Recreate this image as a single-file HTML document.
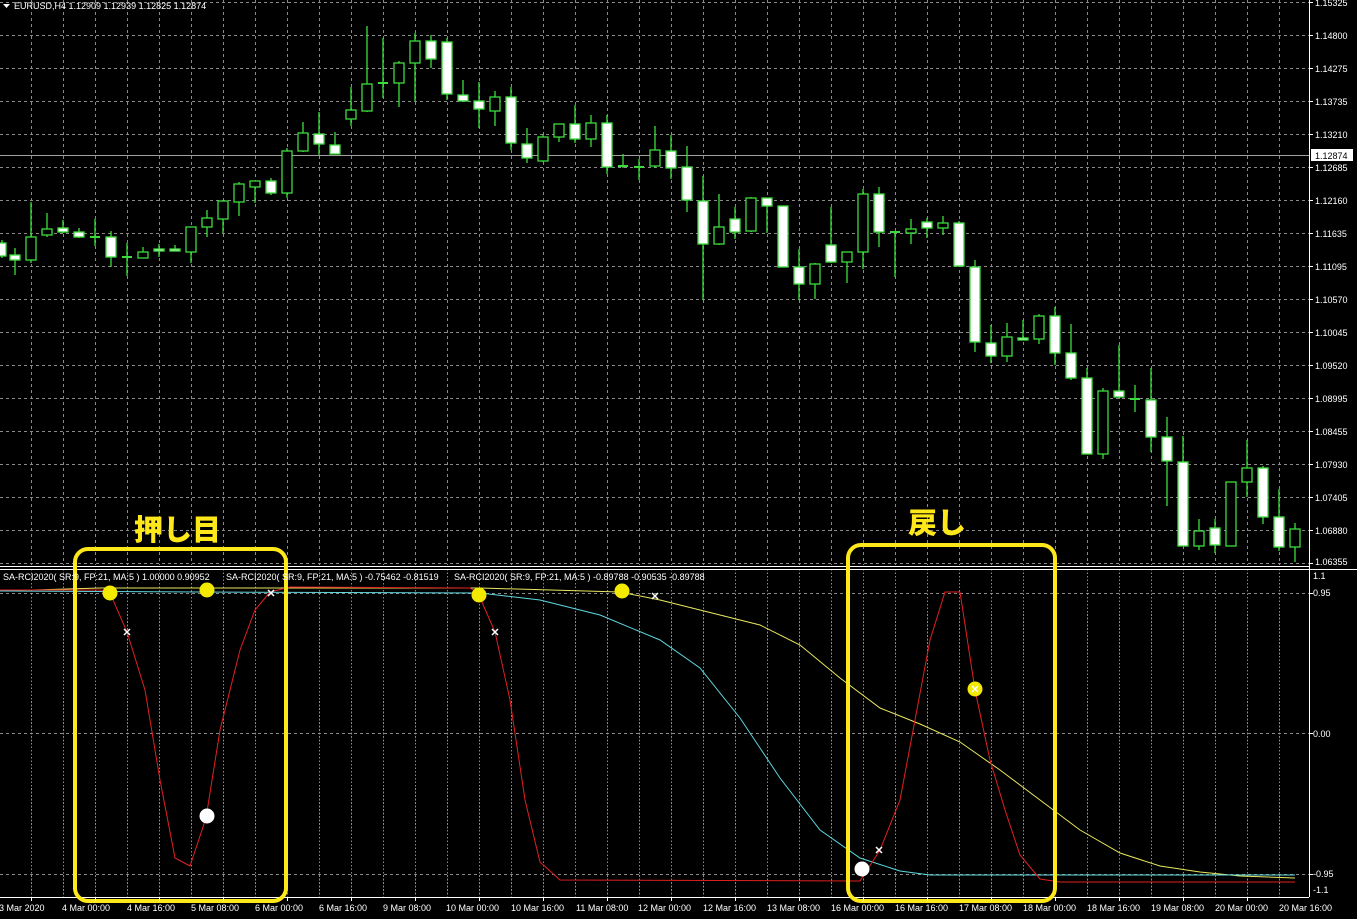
<!DOCTYPE html>
<html><head><meta charset="utf-8"><style>
html,body{margin:0;padding:0;background:#000;overflow:hidden}
svg{display:block}
text{font-family:"Liberation Sans",sans-serif;font-size:9px;fill:#fff}
.jp{font-family:"Liberation Sans","Noto Sans CJK JP",sans-serif;font-weight:900;font-size:29px;fill:#ffe81a}
</style></head><body>
<svg width="1357" height="919" viewBox="0 0 1357 919" xmlns="http://www.w3.org/2000/svg">
<rect width="1357" height="919" fill="#000"/>
<!-- main grid -->
<g stroke="#8a8a8a" stroke-width="1" stroke-dasharray="3,3" shape-rendering="crispEdges">
<path d="M0 2.5H1309M0 35.5H1309M0 68.5H1309M0 101.5H1309M0 134.5H1309M0 167.5H1309M0 200.5H1309M0 233.5H1309M0 266.5H1309M0 299.5H1309M0 332.5H1309M0 365.5H1309M0 398.5H1309M0 431.5H1309M0 464.5H1309M0 497.5H1309M0 530.5H1309M0 563.5H1309"/>
<path d="M0 593.5H1309M0 733.5H1309M0 874.5H1309"/>
<path id="vg" d="M31.5 0V565M63.5 0V565M95.5 0V565M127.5 0V565M159.5 0V565M191.5 0V565M223.5 0V565M255.5 0V565M287.5 0V565M319.5 0V565M351.5 0V565M383.5 0V565M415.5 0V565M447.5 0V565M479.5 0V565M511.5 0V565M543.5 0V565M575.5 0V565M607.5 0V565M639.5 0V565M671.5 0V565M703.5 0V565M735.5 0V565M767.5 0V565M799.5 0V565M831.5 0V565M863.5 0V565M895.5 0V565M927.5 0V565M959.5 0V565M991.5 0V565M1023.5 0V565M1055.5 0V565M1087.5 0V565M1119.5 0V565M1151.5 0V565M1183.5 0V565M1215.5 0V565M1247.5 0V565M1279.5 0V565"/>
<use href="#vg" transform="translate(0,569) scale(1,0.58)"/>
</g>
<!-- current price line -->
<line x1="0" y1="155.5" x2="1309" y2="155.5" stroke="#a0a0a0" stroke-width="1"/>
<!-- candles -->
<g stroke="#3cdc3c" stroke-width="1.3" fill="none">
<path d="M2 240V258M15 248V275M31 202V263M47 213V237M63 220V233M79 228V238M95 219V246M111 231V267M127 243V276M143 247V258M159 244V257M175 245V251M191 227V263M207 210V237M223 201V233M239 182V216M255 181V203M271 178V195M287 148V198M303 122V152M319 112V155M335 132V154M351 87V126M367 26V112M383 38V98M399 61V107M415 33V101M431 35V68M447 38V100M463 80V102M479 82V128M495 91V126M511 87V150M527 128V163M543 135V162M559 124V142M575 105V143M591 115V147M607 115V174M623 154V168M639 159V180M655 126V168M671 135V179M687 146V212M703 176V300M719 194V245M735 207V239M751 197V232M767 198V233M783 206V267M799 249V300M815 263V299M831 207V263M847 252V283M863 189V269M879 187V247M895 232V277M911 219V244M927 218V238M943 216V235M959 221V267M975 260V352M991 325V363M1007 323V362M1023 320V340M1039 314V344M1055 307V365M1071 324V380M1087 368V454M1103 388V459M1119 345V398M1135 385V412M1151 368V452M1167 417V506M1183 436V546M1199 519V550M1215 519V553M1231 482V546M1247 440V497M1263 466V524M1279 489V551M1295 523V562"/>
<path stroke-width="2" d="M90 237H100M122 257H132M378 83H388M618 166H628M634 167H644M890 232H900M1130 399H1140"/>
</g>
<g stroke="#3cdc3c" stroke-width="1.3" fill="#fff">
<rect x="-3" y="243" width="9" height="13"/><rect x="10" y="255" width="10" height="5"/><rect x="58" y="228" width="10" height="4"/><rect x="74" y="232" width="10" height="5"/><rect x="106" y="237" width="10" height="20"/><rect x="154" y="249" width="10" height="2"/><rect x="170" y="249" width="10" height="2"/><rect x="266" y="181" width="10" height="12"/><rect x="314" y="134" width="10" height="10"/><rect x="330" y="145" width="10" height="9"/><rect x="426" y="41" width="10" height="18"/><rect x="442" y="42" width="10" height="52"/><rect x="458" y="95" width="10" height="6"/><rect x="474" y="101" width="10" height="8"/><rect x="506" y="97" width="10" height="46"/><rect x="522" y="144" width="10" height="14"/><rect x="570" y="124" width="10" height="15"/><rect x="602" y="123" width="10" height="44"/><rect x="666" y="151" width="10" height="17"/><rect x="682" y="167" width="10" height="33"/><rect x="698" y="201" width="10" height="43"/><rect x="730" y="219" width="10" height="13"/><rect x="762" y="198" width="10" height="8"/><rect x="778" y="206" width="10" height="61"/><rect x="794" y="267" width="10" height="17"/><rect x="826" y="245" width="10" height="17"/><rect x="874" y="194" width="10" height="38"/><rect x="922" y="222" width="10" height="6"/><rect x="954" y="223" width="10" height="43"/><rect x="970" y="267" width="10" height="75"/><rect x="986" y="343" width="10" height="13"/><rect x="1018" y="338" width="10" height="2"/><rect x="1050" y="316" width="10" height="37"/><rect x="1066" y="353" width="10" height="25"/><rect x="1082" y="378" width="10" height="76"/><rect x="1114" y="391" width="10" height="6"/><rect x="1146" y="400" width="10" height="37"/><rect x="1162" y="437" width="10" height="24"/><rect x="1178" y="462" width="10" height="84"/><rect x="1210" y="528" width="10" height="17"/><rect x="1258" y="468" width="10" height="49"/><rect x="1274" y="517" width="10" height="30"/>
</g>
<g stroke="#3cdc3c" stroke-width="1.3" fill="#000">
<rect x="26" y="237" width="10" height="23"/><rect x="42" y="229" width="10" height="6"/><rect x="138" y="252" width="10" height="6"/><rect x="186" y="227" width="10" height="25"/><rect x="202" y="218" width="10" height="9"/><rect x="218" y="201" width="10" height="18"/><rect x="234" y="184" width="10" height="18"/><rect x="250" y="181" width="10" height="6"/><rect x="282" y="151" width="10" height="42"/><rect x="298" y="133" width="10" height="18"/><rect x="346" y="110" width="10" height="9"/><rect x="362" y="84" width="10" height="27"/><rect x="394" y="63" width="10" height="20"/><rect x="410" y="41" width="10" height="22"/><rect x="490" y="97" width="10" height="14"/><rect x="538" y="137" width="10" height="24"/><rect x="554" y="124" width="10" height="13"/><rect x="586" y="123" width="10" height="16"/><rect x="650" y="150" width="10" height="16"/><rect x="714" y="227" width="10" height="17"/><rect x="746" y="198" width="10" height="33"/><rect x="810" y="264" width="10" height="20"/><rect x="842" y="252" width="10" height="10"/><rect x="858" y="194" width="10" height="58"/><rect x="906" y="229" width="10" height="4"/><rect x="938" y="223" width="10" height="5"/><rect x="1002" y="337" width="10" height="19"/><rect x="1034" y="316" width="10" height="23"/><rect x="1098" y="391" width="10" height="63"/><rect x="1194" y="531" width="10" height="15"/><rect x="1226" y="482" width="10" height="64"/><rect x="1242" y="468" width="10" height="14"/><rect x="1290" y="529" width="10" height="18"/>
</g>
<!-- separators -->
<path d="M0 566.5H1309M0 569.5H1357" stroke="#fff" stroke-width="1"/>
<path d="M1309.5 0V897M0 897.5H1309" stroke="#fff" stroke-width="1"/>
<!-- indicator lines -->
<polyline fill="none" stroke="#e8e860" stroke-width="1" points="0,591 100,588 300,588 480,588 620,592 660,600 700,610 760,625 800,645 840,678 880,708 920,724 960,742 1000,770 1040,800 1080,830 1120,853 1160,866 1200,872 1240,876 1295,878"/>
<polyline fill="none" stroke="#5fd8e0" stroke-width="1" points="0,591 200,592 480,593 540,600 600,615 660,640 700,668 740,718 780,778 820,830 860,858 900,871 930,875 1295,875"/>
<polyline fill="none" stroke="#e02020" stroke-width="1" points="0,590 100,590 110,593 127,632 145,690 160,780 175,858 190,866 206,818 220,730 240,650 255,610 270,592 290,587 470,588 478,593 495,632 510,700 525,800 540,862 560,880 860,881 880,850 900,800 915,720 930,640 945,592 960,592 975,690 990,760 1005,810 1020,855 1040,879 1060,882 1295,882"/>
<g fill="#f4ea00">
<circle cx="110" cy="593" r="7.5"/><circle cx="207" cy="590" r="7.5"/><circle cx="479" cy="595" r="7.5"/><circle cx="622" cy="591" r="7.5"/><circle cx="975" cy="689" r="7.5"/>
</g>
<g fill="#fff"><circle cx="207" cy="816" r="7.5"/><circle cx="862" cy="869" r="7.5"/></g>
<g stroke="#fff" stroke-width="1.5">
<path d="M124 629l6 6M130 629l-6 6M268 590l6 6M274 590l-6 6M492 629l6 6M498 629l-6 6M652 593l6 6M658 593l-6 6M876 847l6 6M882 847l-6 6M972 686l6 6M978 686l-6 6"/>
</g>
<!-- yellow boxes -->
<g fill="none" stroke="#ffe81a" stroke-width="4">
<rect x="75" y="549" width="211" height="352" rx="13"/>
<rect x="848" y="545" width="207" height="356" rx="13"/>
</g>
<text class="jp" x="134" y="540">押し目</text>
<text class="jp" x="908" y="533">戻し</text>
<!-- indicator label -->
<text x="3" y="580">SA-RCI2020( SR:9, FP:21, MA:5 ) 1.00000 0.90952</text>
<text x="226" y="580">SA-RCI2020( SR:9, FP:21, MA:5 ) -0.75462 -0.81519</text>
<text x="454" y="580">SA-RCI2020( SR:9, FP:21, MA:5 ) -0.89788 -0.90535 -0.89788</text>
<!-- header -->
<path d="M3 4h7l-3.5 4z" fill="#fff"/>
<text x="14" y="9">EURUSD,H4  1.12909 1.12939 1.12825 1.12874</text>
<!-- right axis -->
<g>
<path d="M1309 2.5h4M1309 35.5h4M1309 68.5h4M1309 101.5h4M1309 134.5h4M1309 167.5h4M1309 200.5h4M1309 233.5h4M1309 266.5h4M1309 299.5h4M1309 332.5h4M1309 365.5h4M1309 398.5h4M1309 431.5h4M1309 464.5h4M1309 497.5h4M1309 530.5h4M1309 563.5h4M1309 593.5h4M1309 733.5h4M1309 874.5h4" stroke="#fff"/>
<text x="1315" y="6">1.15325</text><text x="1315" y="39">1.14800</text><text x="1315" y="72">1.14275</text><text x="1315" y="105">1.13735</text><text x="1315" y="138">1.13210</text><text x="1315" y="171">1.12685</text><text x="1315" y="204">1.12160</text><text x="1315" y="237">1.11635</text><text x="1315" y="270">1.11095</text><text x="1315" y="303">1.10570</text><text x="1315" y="336">1.10045</text><text x="1315" y="369">1.09520</text><text x="1315" y="402">1.08995</text><text x="1315" y="435">1.08455</text><text x="1315" y="468">1.07930</text><text x="1315" y="501">1.07405</text><text x="1315" y="534">1.06880</text><text x="1315" y="565">1.06355</text>
<rect x="1311" y="149" width="42" height="12" fill="#fff"/>
<text x="1315" y="159" style="fill:#000">1.12874</text>
<text x="1313" y="579">1.1</text><text x="1313" y="596">0.95</text><text x="1313" y="737">0.00</text><text x="1313" y="877">-0.95</text><text x="1313" y="893">-1.1</text>
</g>
<!-- time axis -->
<path d="M31.5 897v4M95.5 897v4M159.5 897v4M223.5 897v4M287.5 897v4M351.5 897v4M415.5 897v4M479.5 897v4M543.5 897v4M607.5 897v4M671.5 897v4M735.5 897v4M799.5 897v4M863.5 897v4M927.5 897v4M991.5 897v4M1055.5 897v4M1119.5 897v4M1183.5 897v4M1247.5 897v4" stroke="#fff"/>
<g>
<text x="-1" y="911">3 Mar 2020</text><text x="62" y="911">4 Mar 00:00</text><text x="127" y="911">4 Mar 16:00</text><text x="191" y="911">5 Mar 08:00</text><text x="255" y="911">6 Mar 00:00</text><text x="319" y="911">6 Mar 16:00</text><text x="383" y="911">9 Mar 08:00</text><text x="446" y="911">10 Mar 00:00</text><text x="511" y="911">10 Mar 16:00</text><text x="576" y="911">11 Mar 08:00</text><text x="638" y="911">12 Mar 00:00</text><text x="703" y="911">12 Mar 16:00</text><text x="767" y="911">13 Mar 08:00</text><text x="831" y="911">16 Mar 00:00</text><text x="895" y="911">16 Mar 16:00</text><text x="959" y="911">17 Mar 08:00</text><text x="1023" y="911">18 Mar 00:00</text><text x="1087" y="911">18 Mar 16:00</text><text x="1151" y="911">19 Mar 08:00</text><text x="1215" y="911">20 Mar 00:00</text><text x="1279" y="911">20 Mar 16:00</text>
</g>
</svg>
</body></html>
